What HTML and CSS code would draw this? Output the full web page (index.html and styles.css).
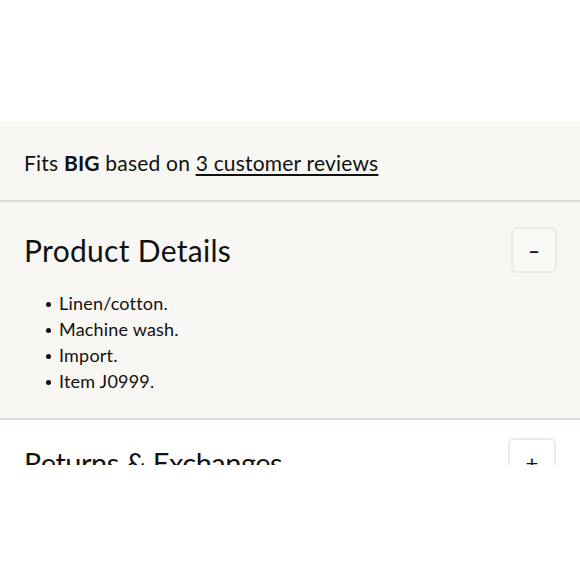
FILE: index.html
```html
<!DOCTYPE html>
<html>
<head>
<meta charset="utf-8">
<link rel="stylesheet" href="styles.css">
</head>
<body>
<div class="page">
  <div class="spacer"></div>
  <section class="fit">
    <p class="fit-text">Fits <b>BIG</b> based on <a href="#" class="reviews">3 customer reviews</a></p>
  </section>
  <section class="details">
    <div class="acc-head">
      <h2 class="acc-title">Product Details</h2>
      <button class="acc-btn">&ndash;</button>
    </div>
    <ul class="detail-list">
      <li>Linen/cotton.</li>
      <li>Machine wash.</li>
      <li>Import.</li>
      <li>Item J0999.</li>
    </ul>
  </section>
  <section class="returns">
    <div class="acc-head">
      <h2 class="acc-title acc-title-returns">Returns &amp; Exchanges</h2>
      <button class="acc-btn acc-btn-plus">+</button>
    </div>
  </section>
</div>
</body>
</html>
```

FILE: styles.css
```css
* { box-sizing: border-box; }
html, body { margin: 0; padding: 0; background: #fff; }
body {
  font-family: Lato, "Noto Sans", sans-serif;
  color: #111;
}
.page { width: 580px; height: 580px; overflow: hidden; }
.spacer { height: 121px; }
.fit {
  background: #f8f7f3;
  height: 81px;
  padding: 3px 24px 0;
  display: flex;
  align-items: center;
  border-bottom: 2px solid #dedcd8;
}
.fit-text { margin: 0; font-size: 21px; letter-spacing: 0.2px; }
.fit-text b { font-weight: 700; }
.reviews { color: #111; text-decoration: underline; text-underline-offset: 3px; }
.details {
  background: #f8f7f3;
  border-bottom: 2px solid #dedcd8;
  padding: 25px 23px 24px 24px;
  height: 218px;
}
.acc-head {
  display: flex;
  justify-content: space-between;
  align-items: center;
}
.acc-title {
  margin: 0;
  font-weight: 400;
  font-size: 30px;
  letter-spacing: 0.3px;
}
.acc-title-returns { font-size: 29px; letter-spacing: -0.5px; }
.acc-btn {
  width: 46px;
  height: 46px;
  border: 2px solid #ebe9e5;
  border-radius: 6px;
  background: #faf9f6;
  font-family: Lato, sans-serif;
  font-size: 20px;
  font-weight: 700;
  color: #111;
  padding: 0;
}
.detail-list {
  list-style: none;
  margin: 17px 0 0;
  padding-left: 35px;
  font-size: 18px;
  line-height: 26px;
  letter-spacing: 0.2px;
}
.detail-list li { position: relative; }
.detail-list li::before {
  content: "";
  position: absolute;
  left: -13px;
  top: 12px;
  width: 5px;
  height: 5px;
  border-radius: 50%;
  background: #111;
}
.returns {
  background: #fff;
  height: 45px;
  overflow: hidden;
  padding: 18px 24px 0 24px;
}
.acc-btn-plus { width: 48px; height: 48px; background: #fff; font-size: 22px; font-weight: 400; }
```
